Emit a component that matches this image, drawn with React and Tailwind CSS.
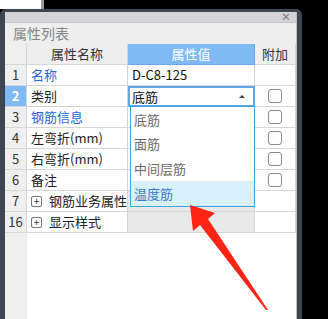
import React from "react";

const rows = [
  { no: "1", name: "名称", blue: true, value: "D-C8-125" },
  { no: "2", name: "类别", selected: true, value: "底筋", check: true },
  { no: "3", name: "钢筋信息", blue: true, value: "", check: true },
  { no: "4", name: "左弯折(mm)", value: "", check: true },
  { no: "5", name: "右弯折(mm)", value: "", check: true },
  { no: "6", name: "备注", value: "", check: true },
  { no: "7", name: "钢筋业务属性", group: true },
  { no: "16", name: "显示样式", group: true },
];

const options = ["底筋", "面筋", "中间层筋", "温度筋"];

const cell = "h-[21px] border-r border-b border-[#d6d6d6] flex items-center";

const PlusBox = () => (
  <span className="shrink-0 w-[11px] h-[11px] border border-[#777] rounded-[2px] flex items-center justify-center text-[10px] leading-none text-[#333] mr-[7px]">
    +
  </span>
);

const Row = ({ row }) => {
  return (
    <>
      <div
        className={`${cell} justify-center text-[13px] ${
          row.selected ? "bg-[#7fbaf5] text-white font-bold" : "bg-[#efefef] text-[#333]"
        }`}
      >
        {row.no}
      </div>
      <div
        className={`${cell} pl-[4px] text-[13px] whitespace-nowrap bg-white ${
          row.blue ? "text-[#2468d8]" : "text-[#222]"
        }`}
      >
        {row.group && <PlusBox />}
        {row.name}
      </div>
      {row.selected ? (
        <div className="h-[21px] border-2 border-[#62a6ea] flex items-center justify-between pl-[2px] pr-[8px] text-[13px] text-[#111] bg-white">
          <span>{row.value}</span>
          <span className="w-0 h-0 border-l-[3px] border-r-[3px] border-b-[3px] border-l-transparent border-r-transparent border-b-[#444]" />
        </div>
      ) : (
        <div
          className={`${cell} pl-[4px] text-[13px] text-[#111] ${
            row.group ? "bg-[#e9e9e9]" : "bg-white"
          }`}
        >
          {row.value}
        </div>
      )}
      <div className={`${cell} justify-center bg-white`}>
        {row.check && (
          <span className="w-[14px] h-[14px] border border-[#8a8a8a] rounded-[3px]" />
        )}
      </div>
    </>
  );
};

const App = () => {
  return (
    <div
      className="relative w-[328px] h-[319px] bg-black overflow-hidden"
      style={{ fontFamily: '"Noto Sans CJK SC", "Liberation Sans", sans-serif' }}
    >
      <div className="flex h-[9px]">
        <div className="w-[41px] bg-white" />
        <div className="w-[3px] bg-[#9a9a9a]" />
      </div>

      <div className="w-[302px] h-[310px] bg-[#3d4651] rounded-t-[6px] pt-[3px] pl-[5px] pr-[5px]">
        <div className="h-full bg-white flex flex-col border-r border-[#bcbcbc]">
          <div className="h-[10px] bg-[#d3d4d8] flex items-center justify-end pr-[5px] text-[10px] leading-none font-bold text-[#7a7a7a]">
            ×
          </div>
          <div className="h-[22px] bg-[#eeeeee] border-t border-[#c4c4c4] flex items-center pl-[8px] text-[14px] text-[#858585]">
            属性列表
          </div>

          <div className="relative flex-1 flex flex-col">
            <div className="grid grid-cols-[22px_101px_127px_41px]">
              <div className={`${cell} bg-[#efefef]`} />
              <div className={`${cell} justify-center bg-[#eeeeee] text-[13px] text-[#333]`}>
                属性名称
              </div>
              <div className="h-[21px] border-r border-b border-[#6aa9ee] bg-[#7fbaf5] flex items-center justify-center text-[13px] text-white">
                属性值
              </div>
              <div className={`${cell} justify-center bg-[#eeeeee] text-[13px] text-[#333]`}>
                附加
              </div>
              {rows.map((row) => (
                <Row key={row.no} row={row} />
              ))}
            </div>
            <div className="flex-1 flex">
              <div className="w-[22px] bg-[#efefef]" />
            </div>

            <div className="absolute left-[125px] top-[62px] w-[125px] h-[101px] bg-white border border-[#3ba4d9] flex flex-col">
              {options.map((opt, i) => (
                <div
                  key={opt}
                  className={`h-[25px] flex items-center pl-[3px] text-[13px] ${
                    i === 3 ? "bg-[#d8f0fa] text-[#3a7bc2]" : "text-[#6a6a6a]"
                  }`}
                >
                  {opt}
                </div>
              ))}
            </div>
          </div>
        </div>
      </div>

      <svg className="absolute left-0 top-0" width="328" height="319" viewBox="0 0 328 319">
        <polygon
          points="190,205 215,213 208,219 268,310 266,310 200,225 193,231"
          fill="#ff2414"
        />
      </svg>
    </div>
  );
};

export default App;
